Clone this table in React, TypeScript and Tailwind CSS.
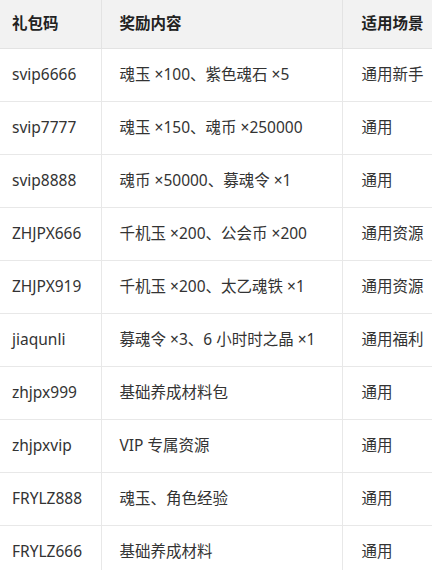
import React from "react";

const rows: [string, string, string][] = [
  ["svip6666", "魂玉 ×100、紫色魂石 ×5", "通用新手"],
  ["svip7777", "魂玉 ×150、魂币 ×250000", "通用"],
  ["svip8888", "魂币 ×50000、募魂令 ×1", "通用"],
  ["ZHJPX666", "千机玉 ×200、公会币 ×200", "通用资源"],
  ["ZHJPX919", "千机玉 ×200、太乙魂铁 ×1", "通用资源"],
  ["jiaqunli", "募魂令 ×3、6 小时时之晶 ×1", "通用福利"],
  ["zhjpx999", "基础养成材料包", "通用"],
  ["zhjpxvip", "VIP 专属资源", "通用"],
  ["FRYLZ888", "魂玉、角色经验", "通用"],
  ["FRYLZ666", "基础养成材料", "通用"],
];

export default function App() {
  return (
    <div
      className="w-[432px] h-[570px] overflow-hidden bg-white text-[15.5px] text-[#333]"
      style={{ fontFamily: '"Noto Sans", "Noto Sans CJK SC", sans-serif' }}
    >
      <table className="border-collapse table-fixed w-[460px]">
        <colgroup>
          <col className="w-[101px]" />
          <col className="w-[241px]" />
          <col className="w-[118px]" />
        </colgroup>
        <thead>
          <tr className="bg-[#f2f2f2] h-[48px]">
            <th className="text-left font-bold text-[#222] pl-[12px] border-r border-b border-[#e3e3e3]">礼包码</th>
            <th className="text-left font-bold text-[#222] pl-[18px] border-r border-b border-[#e3e3e3]">奖励内容</th>
            <th className="text-left font-bold text-[#222] pl-[19px] border-b border-[#e3e3e3]">适用场景</th>
          </tr>
        </thead>
        <tbody>
          {rows.map((r) => (
            <tr key={r[0]} className="h-[53px]">
              <td className="pl-[12px] border-r border-b border-[#e8e8e8] whitespace-nowrap">{r[0]}</td>
              <td className="pl-[18px] border-r border-b border-[#e8e8e8] whitespace-nowrap">{r[1]}</td>
              <td className="pl-[19px] border-b border-[#e8e8e8] whitespace-nowrap">{r[2]}</td>
            </tr>
          ))}
        </tbody>
      </table>
    </div>
  );
}
